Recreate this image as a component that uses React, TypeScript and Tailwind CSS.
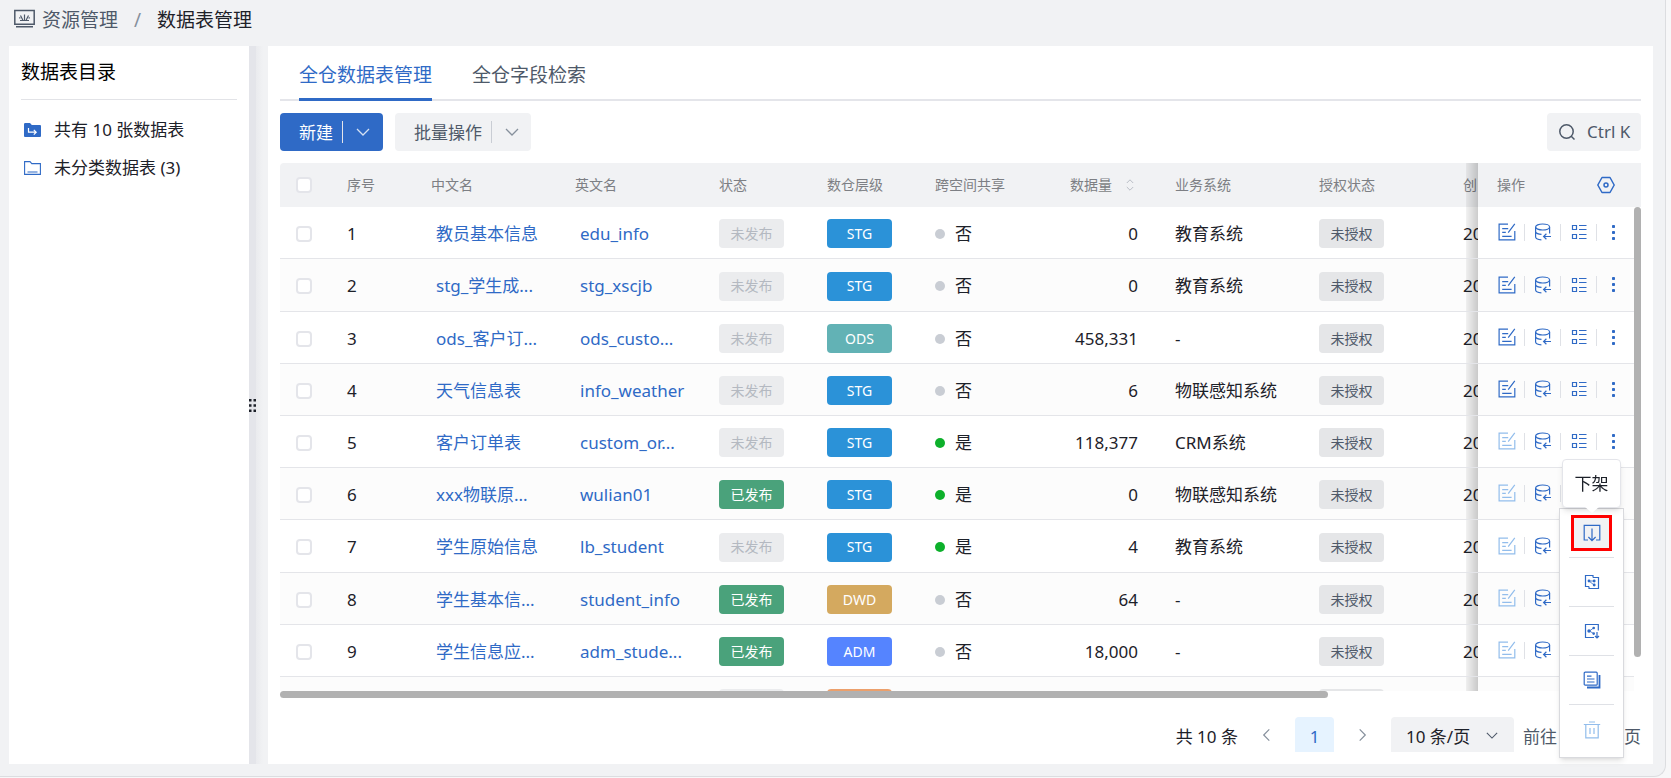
import React from "react";

type Level = "STG" | "ODS" | "DWD" | "ADM" | "DWS";

interface Row {
  id: number;
  cn: string;
  en: string;
  published: boolean;
  level: Level;
  shared: boolean;
  count: string;
  system: string;
  editable: boolean;
}

const rows: Row[] = [
  { id: 1, cn: "教员基本信息", en: "edu_info", published: false, level: "STG", shared: false, count: "0", system: "教育系统", editable: true },
  { id: 2, cn: "stg_学生成...", en: "stg_xscjb", published: false, level: "STG", shared: false, count: "0", system: "教育系统", editable: true },
  { id: 3, cn: "ods_客户订...", en: "ods_custo...", published: false, level: "ODS", shared: false, count: "458,331", system: "-", editable: true },
  { id: 4, cn: "天气信息表", en: "info_weather", published: false, level: "STG", shared: false, count: "6", system: "物联感知系统", editable: true },
  { id: 5, cn: "客户订单表", en: "custom_or...", published: false, level: "STG", shared: true, count: "118,377", system: "CRM系统", editable: false },
  { id: 6, cn: "xxx物联原...", en: "wulian01", published: true, level: "STG", shared: true, count: "0", system: "物联感知系统", editable: false },
  { id: 7, cn: "学生原始信息", en: "lb_student", published: false, level: "STG", shared: true, count: "4", system: "教育系统", editable: false },
  { id: 8, cn: "学生基本信...", en: "student_info", published: true, level: "DWD", shared: false, count: "64", system: "-", editable: false },
  { id: 9, cn: "学生信息应...", en: "adm_stude...", published: true, level: "ADM", shared: false, count: "18,000", system: "-", editable: false },
];

const levelColor: Record<Level, string> = {
  STG: "bg-[#2b92d8]",
  ODS: "bg-[#62b2b5]",
  DWD: "bg-[#d4a95f]",
  ADM: "bg-[#5584ff]",
  DWS: "bg-[#eca06c]",
};

const badge = "flex h-[29px] w-[65px] items-center justify-center rounded text-sm";
const stroke = { fill: "none", stroke: "currentColor", strokeWidth: 1.2 } as const;

function Chevron({ className }: { className: string }) {
  return (
    <svg viewBox="0 0 14 8" className={className} {...stroke} strokeWidth={1.3}>
      <path d="M1 1l6 6 6-6" />
    </svg>
  );
}

function EditIcon() {
  return (
    <svg width="18" height="18" viewBox="0 0 18 18" {...stroke}>
      <path d="M10 1.2H1.1v15.7h15.7V8M16.8.8l-6.6 8.900M4.200 5.600h6M4.200 9.400h3.600M4.200 13.400h9.400" />
    </svg>
  );
}

function DatabaseIcon() {
  return (
    <svg width="18" height="18" viewBox="0 0 18 18" {...stroke}>
      <ellipse cx="8.600" cy="4" rx="7" ry="3" />
      <path d="M1.600 4v10c0 1.400 2.400 2.500 5.800 2.800M15.600 4v6.400M1.600 8.800c.6 1.500 3 2.500 5.900 2.600M17 13.500H9.800M12.400 10.800l-2.800 2.700 2.800 2.700" />
    </svg>
  );
}

function ListIcon() {
  return (
    <svg width="16" height="16" viewBox="0 0 16 16" {...stroke}>
      <path d="M1.500 1.500h4v4h-4zM1.500 10.500h4v4h-4zM8 1.500h7.500M8 5.500h7.500M8 10.500h7.500M8 14.500h7.500" />
    </svg>
  );
}

function DotsIcon() {
  return (
    <svg width="3" height="15" viewBox="0 0 3 15" fill="currentColor">
      <rect width="3" height="3" rx=".8" />
      <rect y="6" width="3" height="3" rx=".8" />
      <rect y="12" width="3" height="3" rx=".8" />
    </svg>
  );
}

function ActionButton({ label, last, muted, children }: { label: string; last?: boolean; muted?: boolean; children: React.ReactNode }) {
  return (
    <button
      type="button"
      aria-label={label}
      disabled={muted}
      className={`flex h-[17px] items-center justify-center ${last ? "w-8" : "w-9 border-r border-[#dfe1e6]"} ${muted ? "text-[#92bdec]" : "text-[#2f6ac6]"}`}
    >
      {children}
    </button>
  );
}

function Checkbox({ label }: { label: string }) {
  return (
    <input
      type="checkbox"
      aria-label={label}
      className="block size-4 appearance-none rounded border-2 border-[#e4e5ea] bg-white"
    />
  );
}

const pinned =
  "sticky right-0 z-10 before:absolute before:inset-y-0 before:-left-3 before:w-3 before:bg-linear-to-r before:from-black/5 before:to-black/20";

function DataTable() {
  const th = "h-11 border-0 pl-[13px] text-left font-normal";
  return (
    <table className="w-[1771px] table-fixed border-separate border-spacing-0">
      <colgroup>
        <col className="w-[54px]" />
        <col className="w-[84px]" />
        <col className="w-36" />
        <col className="w-36" />
        <col className="w-[108px]" />
        <col className="w-[108px]" />
        <col className="w-[108px]" />
        <col className="w-[132px]" />
        <col className="w-36" />
        <col className="w-36" />
        <col />
        <col className="w-[163px]" />
      </colgroup>
      <thead className="text-sm text-[#7d7f84]">
        <tr className="[&>th]:bg-[#f1f2f4]">
          <th className="h-11 rounded-tl pl-4"><Checkbox label="全选" /></th>
          <th className={th}>序号</th>
          <th className={th}>中文名</th>
          <th className={th}>英文名</th>
          <th className={th}>状态</th>
          <th className={th}>数仓层级</th>
          <th className={th}>跨空间共享</th>
          <th className="pr-7">
            <span className="flex items-center justify-end gap-[14px] font-normal">
              数据量
              <svg width="8" height="12" viewBox="0 0 8 12" fill="none" stroke="#b9bdc5">
                <path d="M.8 4L4 .8 7.200 4M.8 8L4 11.200 7.200 8" />
              </svg>
            </span>
          </th>
          <th className={th}>业务系统</th>
          <th className={th}>授权状态</th>
          <th className={th}>创</th>
          <th className={`${pinned} rounded-tr pr-[26px] pl-[19px] font-normal`}>
            <span className="flex items-center justify-between">
              操作
              <button type="button" aria-label="列设置" className="text-[#2f6ac6]">
                <svg width="18" height="18" viewBox="0 0 18 18" {...stroke} strokeWidth={1.5}>
                  <path d="M5 1.500h8L17.200 9 13 16.500H5L.8 9z" strokeLinejoin="round" />
                  <circle cx="9" cy="9" r="2" />
                </svg>
              </button>
            </span>
          </th>
        </tr>
      </thead>
      <tbody className="text-[17px] text-[#1d2129] [&_td]:border-b [&_td]:border-[#e4e5e9] [&_td]:bg-white [&_td]:pl-[13px] [&>tr:nth-child(even)>td]:bg-[#fcfcfc]">
        {rows.map((r) => (
          <tr
            key={r.id}
            className="[&>td]:h-[52px] [&>td]:pt-[2px] nth-[5n+2]:[&>td]:h-[53px]"
          >
            <td><div className="pl-[3px]"><Checkbox label={`选择 ${r.id}`} /></div></td>
            <td>{r.id}</td>
            <td><a href="#" className="block truncate pl-[5px] text-[#2f6ac6]">{r.cn}</a></td>
            <td><a href="#" className="block truncate pl-[5px] text-[#2f6ac6]">{r.en}</a></td>
            <td>
              <span className={`${badge} ${r.published ? "bg-[#4aa27b] text-white" : "bg-[#ebecee] text-[#b4b9c1]"}`}>
                {r.published ? "已发布" : "未发布"}
              </span>
            </td>
            <td><span className={`${badge} ${levelColor[r.level]} text-white`}>{r.level}</span></td>
            <td>
              <span className="flex items-center gap-[10px]">
                <i className={`size-[10px] rounded-full ${r.shared ? "bg-[#0db02b]" : "bg-[#c9cdd4]"}`} />
                {r.shared ? "是" : "否"}
              </span>
            </td>
            <td className="pr-6 text-right">{r.count}</td>
            <td>{r.system}</td>
            <td><span className={`${badge} bg-[#e5e6e8] text-[#4e5969]`}>未授权</span></td>
            <td>20</td>
            <td className={pinned}>
              <div className="-ml-[2px] flex items-center pb-[3px]">
                <ActionButton label="编辑" muted={!r.editable}><EditIcon /></ActionButton>
                <ActionButton label="数据接入"><DatabaseIcon /></ActionButton>
                <ActionButton label="字段"><ListIcon /></ActionButton>
                <ActionButton label="更多" last><DotsIcon /></ActionButton>
              </div>
            </td>
          </tr>
        ))}
        <tr className="[&>td]:h-[52px] [&>td]:pt-[2px]">
          <td />
          <td />
          <td />
          <td />
          <td><span className={`${badge} bg-[#ebecee]`} /></td>
          <td><span className={`${badge} ${levelColor.DWS}`} /></td>
          <td />
          <td />
          <td />
          <td><span className={`${badge} bg-[#e5e6e8]`} /></td>
          <td />
          <td className={pinned} />
        </tr>
      </tbody>
    </table>
  );
}

function MenuItem({ label, active, muted, last, children }: { label: string; active?: boolean; muted?: boolean; last?: boolean; children: React.ReactNode }) {
  return (
    <li className={`flex h-[49px] items-center justify-center ${last ? "" : "border-b border-[#dfe1e6]"}`}>
      <button
        type="button"
        aria-label={label}
        className={`flex h-9 w-[41px] items-center justify-center ${active ? "border-[3px] border-[#ff0000] bg-[#f1f2f4]" : ""} ${muted ? "text-[#92bdec]" : "text-[#2f6ac6]"}`}
      >
        {children}
      </button>
    </li>
  );
}

function MoreMenu() {
  return (
    <div className="absolute right-[29px] bottom-[6px] z-20 flex w-[65px] flex-col items-center">
      <div role="tooltip" className="relative z-10 flex h-[49px] w-[59px] items-center justify-center rounded border border-[#e4e5ea] bg-white text-[17px] text-[#1d2129] shadow-md">
        下架
        <svg className="absolute top-full left-1/2 -ml-[7px]" width="14" height="7" viewBox="0 0 14 7" fill="#fff">
          <path d="M0 0h14L7 6z" />
        </svg>
      </div>
      <ul className="w-full border border-[#d9dade] bg-white px-[9px] pb-[3px] shadow-md">
        <MenuItem label="下架" active>
          <svg width="18" height="18" viewBox="0 0 18 18" {...stroke}>
            <path d="M5 16H1.200V1.300h15.600V16H13M9 4.500v12M5.400 13L9 16.600l3.600-3.600" />
          </svg>
        </MenuItem>
        <MenuItem label="血缘">
          <svg width="16" height="16" viewBox="0 0 16 16" {...stroke}>
            <path d="M9 3.500V1.500H1.500v11H5M5 12.500V14.500h9.500v-11H9" />
            <path d="M5 7h5M5 7l5 4" strokeWidth="0.800" />
            <g fill="currentColor" stroke="none">
              <circle cx="5" cy="7" r="1.400" />
              <circle cx="10.200" cy="7" r="1.400" />
              <circle cx="10.200" cy="11" r="1.400" />
            </g>
          </svg>
        </MenuItem>
        <MenuItem label="导出">
          <svg width="16" height="16" viewBox="0 0 16 16" {...stroke}>
            <path d="M14.300 7.500V1.500H1.500v13h8.500M13 9v6M11 13l2 2 2-2" />
            <path d="M5.500 8l4-3M5.500 8l4 2.500" strokeWidth="0.800" />
            <g fill="currentColor" stroke="none">
              <circle cx="5" cy="8" r="1.700" />
              <circle cx="9.700" cy="5" r="1.300" />
              <circle cx="9.700" cy="10.600" r="1.300" />
            </g>
          </svg>
        </MenuItem>
        <MenuItem label="复制">
          <svg width="18" height="18" viewBox="0 0 18 18" {...stroke}>
            <rect x="1.200" y="1.200" width="13" height="13" rx="1" />
            <path d="M16.500 4v12.500H4" strokeWidth="1.800" />
            <path d="M4 5.200h4.500M4 8h7.500M4 11h7.500" />
          </svg>
        </MenuItem>
        <MenuItem label="删除" muted last>
          <svg width="18" height="18" viewBox="0 0 18 18" {...stroke}>
            <path d="M.8 3.500h16.400M6 1h6M2.800 3.500v13.300h12.400V3.500M7 7v6M11 7v6" />
          </svg>
        </MenuItem>
      </ul>
    </div>
  );
}

export default function App() {
  return (
    <div className="h-screen bg-[#f7f7f8] pr-[5px] pb-[1px] font-['Noto_Sans','Noto_Sans_CJK_SC',sans-serif] text-[17px] text-[#1d2129]">
      <div className="flex h-full flex-col rounded-br-xl border-r border-b border-[#dcdde0] bg-[#f1f2f4] pr-3 pb-3 pl-[9px]">
        <nav className="flex h-[46px] shrink-0 items-center pb-[6px] pl-[5px] text-[19px]">
          <svg className="mb-[3px]" width="21" height="19" viewBox="0 0 21 19" fill="none" stroke="#4e5969" strokeWidth="1.500">
            <path d="M.8 1.500h19.400v13.800H.8zM2 17.800h17" />
            <path d="M6 11.500h9M10.500 11V5.500M8.800 11L6.500 6.500M12.200 11l2.300-4.500" strokeWidth="1.200" />
            <path d="M5.800 8.200v1.200M15.200 8.200v1.200" strokeWidth="1.300" />
          </svg>
          <a href="#" className="ml-[7px] text-[#4e5969]">资源管理</a>
          <span className="mx-4 text-[#86909c]">/</span>
          <span>数据表管理</span>
        </nav>

        <div className="flex min-h-0 flex-1">
          <aside className="w-60 shrink-0 bg-white px-3">
            <h2 className="flex h-[54px] items-center border-b border-[#e2e3e7] text-[19px] text-black">数据表目录</h2>
            <ul className="mt-[11px]">
              <li>
                <a href="#" className="flex h-[38px] items-center gap-[13px] pl-[3px]">
                  <svg width="17" height="14" viewBox="0 0 17 14">
                    <path d="M0 1.200Q0 0 1.200 0H6l1.800 2H16q1 0 1 1v10q0 1-1 1H1q-1 0-1-1z" fill="#2f6ac6" />
                    <path d="M4.500 5v4.200h7.500M9.800 6.800l2.400 2.400-2.400 2.400" fill="none" stroke="#fff" strokeWidth="1.200" />
                  </svg>
                  共有 10 张数据表
                </a>
              </li>
              <li>
                <a href="#" className="flex h-[38px] items-center gap-[13px] pl-[3px]">
                  <svg width="17" height="14" viewBox="0 0 17 14" fill="none" stroke="#2f6ac6" strokeWidth="1.100">
                    <path d="M.6.600h5.400l1.800 2h8.600v10.800H.6zM3.500 11h10" />
                  </svg>
                  未分类数据表 (3)
                </a>
              </li>
            </ul>
          </aside>
          <div className="flex w-[7px] shrink-0 items-center justify-center bg-[#e4e5ea]">
            <svg width="7" height="13" viewBox="0 0 7 13" fill="#1d2129">
              <path d="M0 0h2.500v2.500H0zM4.500 0H7v2.500H4.500zM0 5.200h2.500v2.500H0zM4.500 5.200H7v2.500H4.500zM0 10.400h2.500v2.500H0zM4.500 10.400H7v2.500H4.500z" />
            </svg>
          </div>
          <div className="w-3 shrink-0 bg-linear-to-r from-[#eaebee] to-[#f1f2f4] to-60%" />

          <main className="relative flex min-w-0 flex-1 flex-col bg-white px-3 pb-3">
            <div role="tablist" className="flex h-[55px] shrink-0 gap-10 pl-[19px] text-[19px] shadow-[inset_0_-2px_0_#e4e5ea]">
              <button type="button" role="tab" aria-selected="true" className="border-b-[3px] border-[#2f6ac6] pt-[6px] text-[#2f6ac6]">全仓数据表管理</button>
              <button type="button" role="tab" aria-selected="false" className="border-b-[3px] border-transparent pt-[6px] text-[#4e5969]">全仓字段检索</button>
            </div>

            <div className="flex h-[62px] shrink-0 items-center gap-3">
              <div className="flex h-[38px] w-[103px] items-center rounded bg-[#2f6ac6] pl-[19px] text-white">
                <button type="button" className="pt-[2px]">新建</button>
                <button type="button" aria-label="更多新建方式" className="ml-[9px] flex h-[22px] flex-1 items-center justify-center border-l border-[#e4e5ea]">
                  <Chevron className="h-2 w-[14px] opacity-80" />
                </button>
              </div>
              <div className="flex h-[38px] w-[136px] items-center rounded bg-[#f1f2f4] pl-[19px] text-[#4e5969]">
                <button type="button" className="pt-[2px]">批量操作</button>
                <button type="button" aria-label="更多批量操作" className="ml-[9px] flex h-[22px] flex-1 items-center justify-center border-l border-[#c9cdd4]">
                  <Chevron className="h-2 w-[14px] text-[#86909c]" />
                </button>
              </div>
              <button type="button" className="ml-auto flex h-[38px] w-[94px] items-center gap-3 rounded bg-[#f1f2f4] pl-3 text-[#4e5969]">
                <svg width="16" height="16" viewBox="0 0 16 16" fill="none" stroke="currentColor" strokeWidth="1.500">
                  <circle cx="7.500" cy="7.500" r="6.700" />
                  <path d="M12 12l3.500 3.500" />
                </svg>
                Ctrl K
              </button>
            </div>

            <div className="relative min-h-0 flex-1">
              <div className="h-full overflow-hidden">
                <DataTable />
              </div>
              <div className="absolute top-11 right-0 bottom-0 z-10 w-[7px] bg-white">
                <div className="h-[93%] rounded-full bg-[#b1b1b1]" />
              </div>
            </div>
            <div className="h-[7px] shrink-0">
              <div className="h-full w-[77%] rounded-full bg-[#b1b1b1]" />
            </div>

            <div className="mt-[19px] flex h-[35px] shrink-0 items-center justify-end">
              <span className="pt-1">共 10 条</span>
              <button type="button" aria-label="上一页" className="flex w-[57px] justify-center text-[#86909c]">
                <Chevron className="h-2 w-[13px] rotate-90" />
              </button>
              <button type="button" className="h-full w-[39px] rounded-t bg-[#e6f3ff] pt-1 text-[#2f6ac6]">1</button>
              <button type="button" aria-label="下一页" className="flex w-[57px] justify-center text-[#86909c]">
                <Chevron className="h-2 w-[13px] -rotate-90" />
              </button>
              <span className="relative h-full">
                <select aria-label="每页条数" defaultValue="10" className="h-full w-[123px] appearance-none rounded-t bg-[#f1f2f4] pt-1 pl-[15px]">
                  <option value="10">10 条/页</option>
                </select>
                <Chevron className="pointer-events-none absolute top-[15px] right-4 h-[7px] w-3 text-[#4e5969]" />
              </span>
              <label className="ml-[9px] flex items-center gap-[10px] pt-1 text-[#4e5969]">
                前往
                <input aria-label="页码" className="h-7 w-[47px] rounded bg-[#f1f2f4]" />
                页
              </label>
            </div>

            <MoreMenu />
          </main>
        </div>
      </div>
    </div>
  );
}
